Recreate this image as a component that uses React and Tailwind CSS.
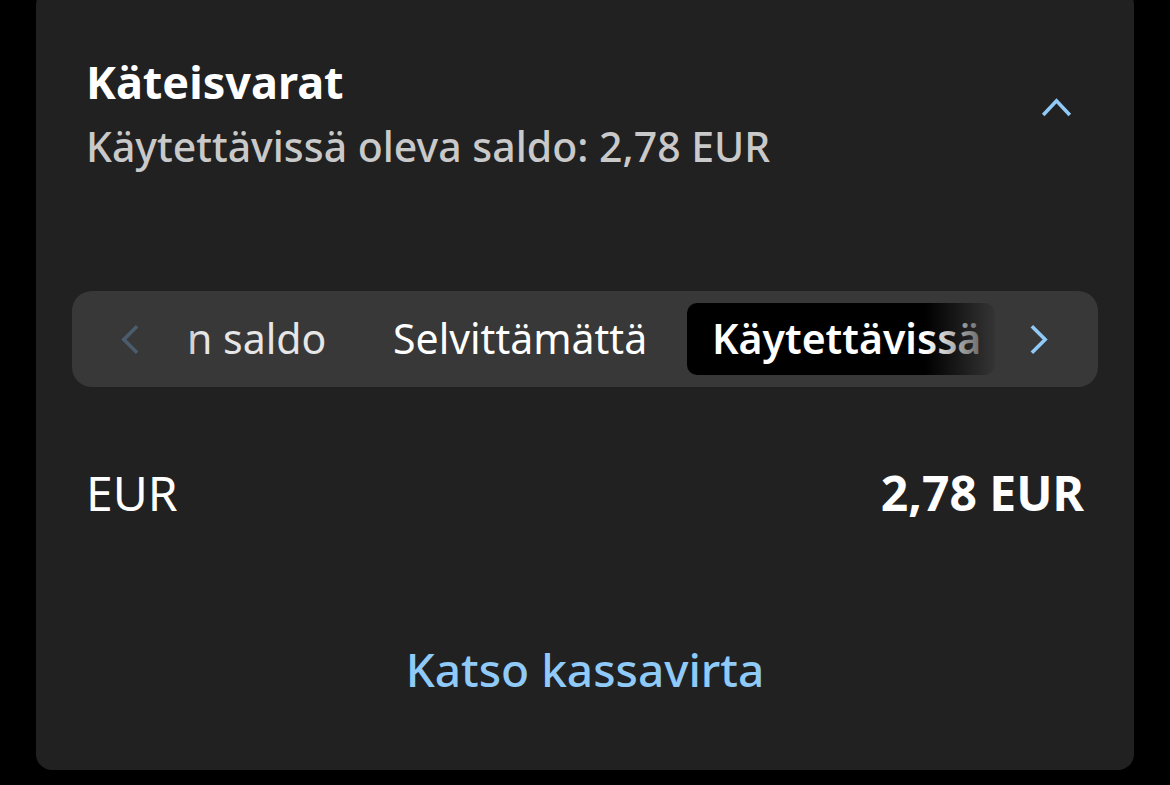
import { useState } from 'react';

const font = { fontFamily: '"Noto Sans", "Open Sans", sans-serif' };

function Chevron({ dir = 'up', className = '' }) {
  // simple stroked chevrons, matching the thin iOS style
  const pts = {
    up: '2,18 16,3 30,18',
    left: '17,2 3,16 17,30',
    right: '3,2 17,16 3,30',
  }[dir];
  const box = dir === 'up' ? '0 0 32 20' : '0 0 20 32';
  return (
    <svg viewBox={box} className={className} fill="none" stroke="currentColor" strokeWidth="3.8" strokeLinecap="butt" strokeLinejoin="miter">
      <polyline points={pts} />
    </svg>
  );
}

export default function App() {
  const [open, setOpen] = useState(true);
  const tabs = [
    { label: 'n saldo', cls: 'w-[197px] pl-[27px] text-[#e6e6e6]' },
    { label: 'Selvittämättä', cls: 'w-[330px] pl-[36px] text-white' },
    { label: 'Käytettävissä', cls: 'w-[308px] pl-[25px] bg-black font-semibold text-white' },
  ];

  return (
    <div className="w-[1170px] h-[785px] bg-black px-[36px] overflow-hidden" style={font}>
      <div className="-mt-[11px] h-[781px] rounded-[16px] bg-[#212121] flex flex-col">
        {/* header */}
        <div className="flex items-start justify-between pl-[50px] pr-[62px] pt-[67px]">
          <div className="flex flex-col">
            <h2 className="text-[45px] leading-[52px] font-bold text-white">Käteisvarat</h2>
            <p className="mt-[14px] text-[41px] leading-[48px] font-medium text-[#c9c9c9]">
              Käytettävissä oleva saldo: 2,78 EUR
            </p>
          </div>
          <button onClick={() => setOpen(!open)} className="mt-[42px] text-[#90caf9]" aria-label="Pienennä">
            <Chevron dir="up" className="w-[31px] h-[19px]" />
          </button>
        </div>

        {/* segmented tabs */}
        <div className="mx-[36px] mt-[121px] h-[96px] rounded-[20px] bg-[#383838] flex items-center pl-[49px]">
          <Chevron dir="left" className="w-[19px] h-[31px] text-[#4b5c6d] shrink-0" />
          <div className="relative w-[840px] h-[72px] ml-[20px] overflow-hidden flex items-center">
            {tabs.map((t) => (
              <div
                key={t.label}
                className={`shrink-0 h-[72px] flex items-center rounded-[10px] text-[41px] whitespace-nowrap ${t.cls}`}
              >
                {t.label}
              </div>
            ))}
            <div className="absolute left-0 top-0 h-full w-[40px] bg-gradient-to-r from-[#383838]/60 to-transparent" />
            <div className="absolute right-0 top-0 h-full w-[75px] bg-gradient-to-r from-transparent to-[#383838]" />
          </div>
          <Chevron dir="right" className="ml-[29px] w-[19px] h-[31px] text-[#90caf9] shrink-0" />
        </div>

        {/* balance row */}
        <div className="flex items-center justify-between px-[50px] mt-[78px]">
          <span className="text-[48px] leading-[56px] text-white">EUR</span>
          <span className="text-[48px] leading-[56px] font-bold text-white">2,78 EUR</span>
        </div>

        {/* link */}
        <div className="flex justify-center mt-[121px]">
          <button className="text-[46px] leading-[54px] font-medium text-[#90caf9]">Katso kassavirta</button>
        </div>
      </div>
    </div>
  );
}
